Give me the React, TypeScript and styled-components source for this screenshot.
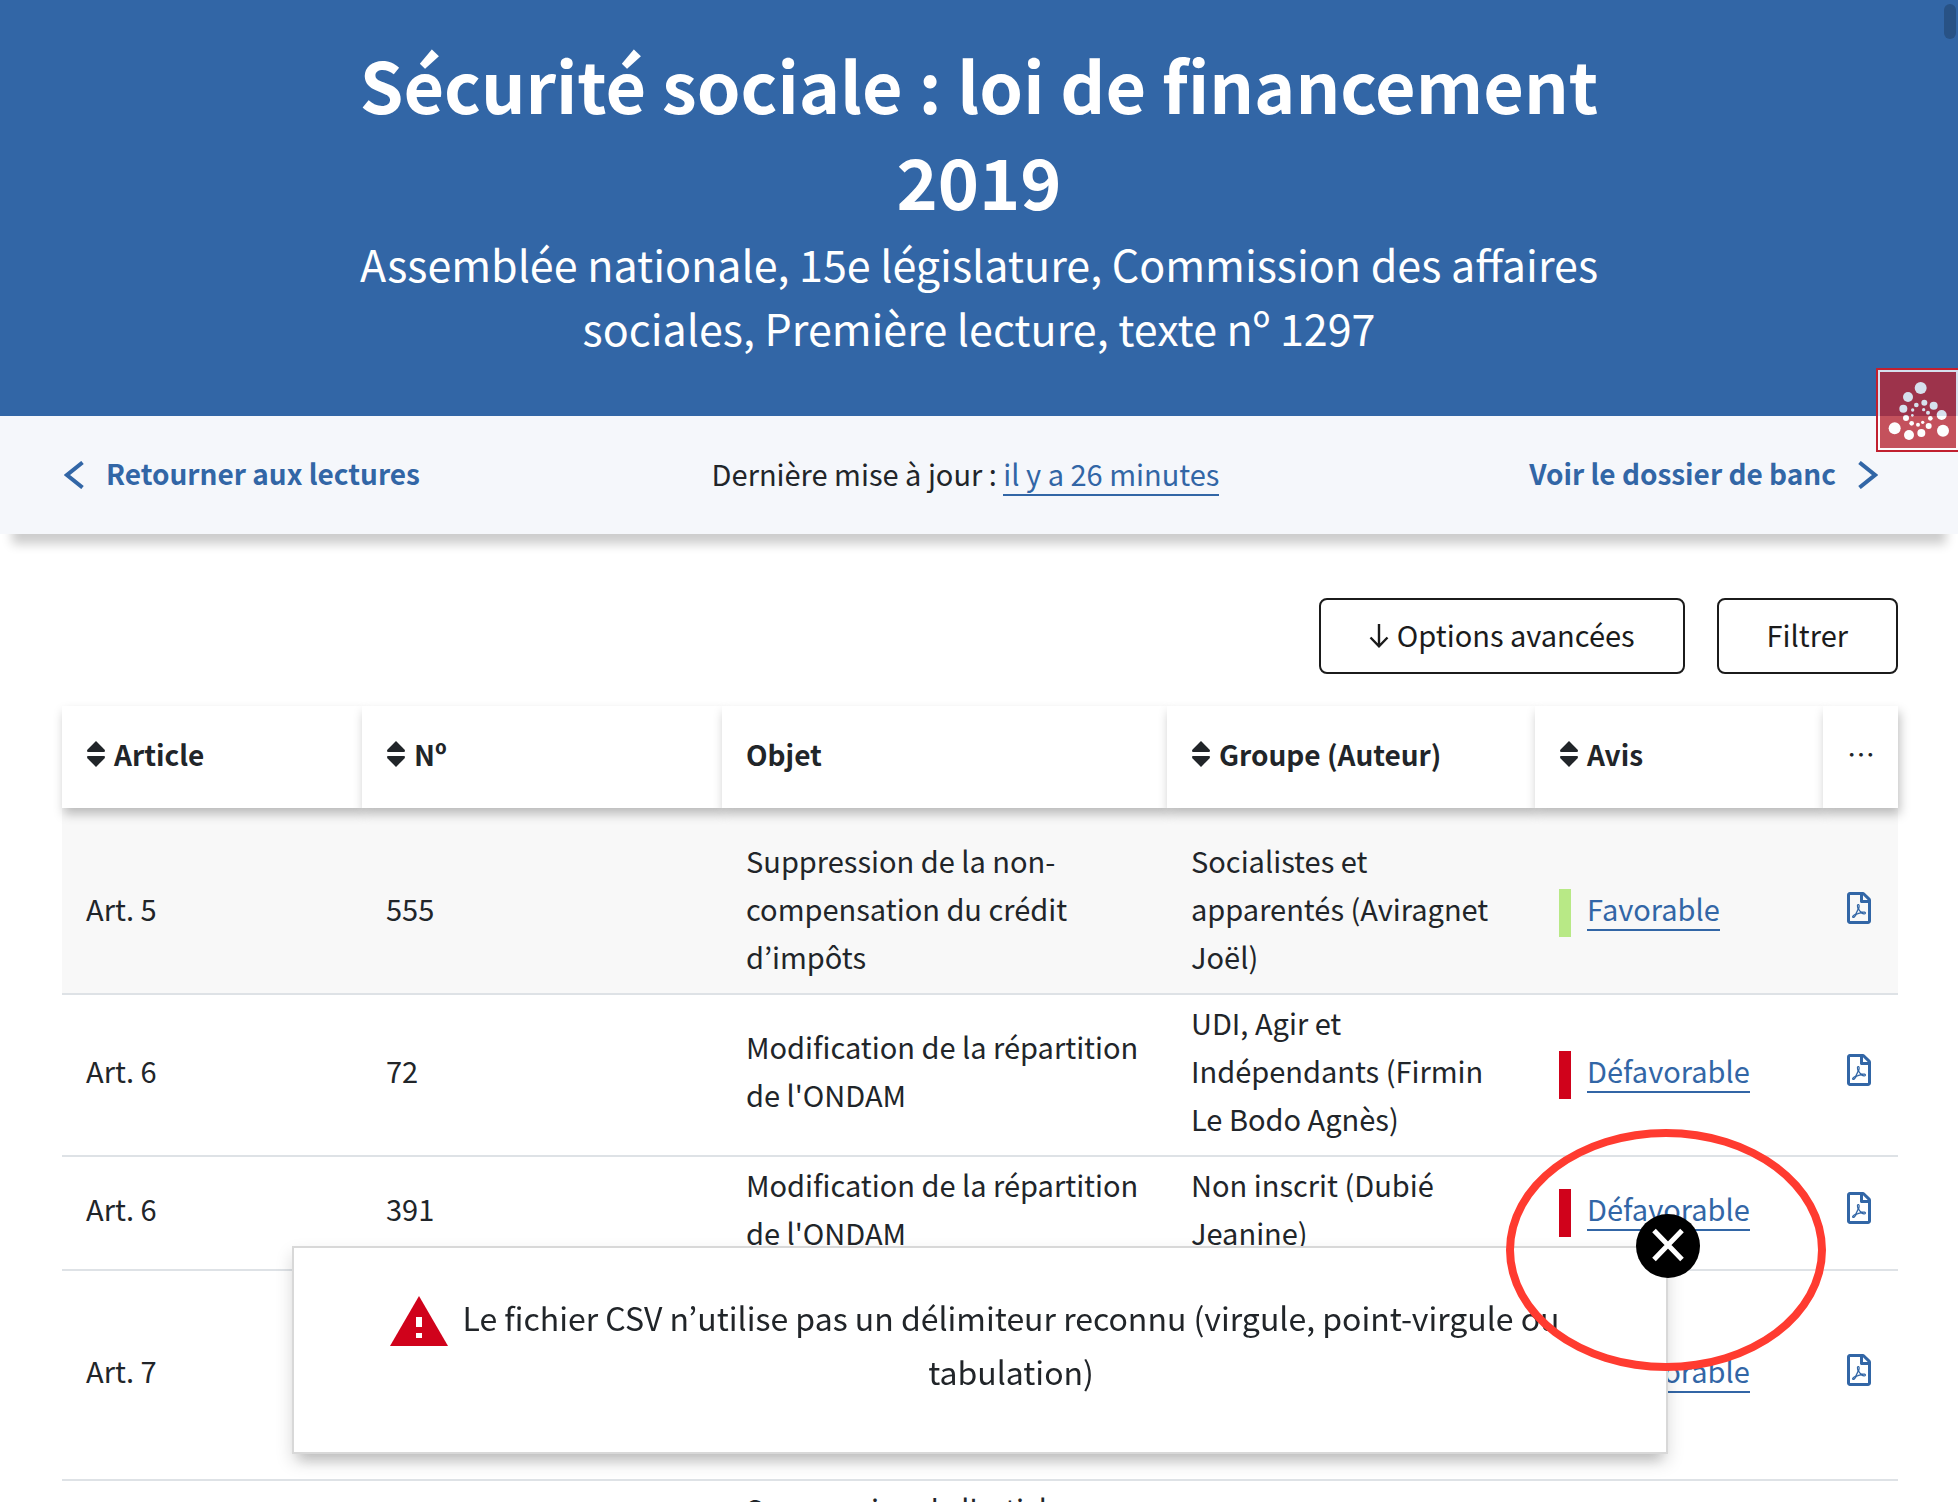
import React from "react";
import styled, { createGlobalStyle } from "styled-components";
import { FaRegFilePdf } from "react-icons/fa";

const color = {
  blue: "#3266a6",
  ink: "#212529",
  line: "#dee2e6",
  red: "#d0021b",
  green: "#b8e986",
};

const GlobalStyle = createGlobalStyle`
  *, *::before, *::after { box-sizing: border-box; }
  html, body { margin: 0; height: 100vh; overflow: hidden; background: #fff; }
  body {
    color: ${color.ink};
    font-family: "Noto Sans CJK JP", "Noto Sans CJK SC", "Open Sans", sans-serif;
    font-size: 29px;
    line-height: 48px;
  }
`;

const Hero = styled.header`
  padding: 36px 32px 57px;
  background: ${color.blue};
  color: #fff;
  text-align: center;
`;

const Title = styled.h1`
  max-width: 1300px;
  margin: 0 auto 3px;
  font-size: 70px;
  font-weight: 600;
  line-height: 96px;
`;

const Subtitle = styled.p`
  max-width: 1300px;
  margin: 0 auto;
  font-size: 43px;
  line-height: 64px;
`;

const NavBar = styled.nav`
  display: flex;
  justify-content: space-between;
  padding: 33px 80px 37px 64px;
  background: #f5f7fb;
  box-shadow: 0 22px 10px -12px rgba(0, 0, 0, 0.2);
`;

const NavLink = styled.a<{ $forward?: boolean }>`
  display: flex;
  align-items: center;
  gap: 22px;
  padding-left: ${(p) => (p.$forward ? 18 : 0)}px;
  color: ${color.blue};
  font-size: 28px;
  font-weight: 600;
  text-decoration: none;
`;

const Chevron = styled.svg`
  width: 20px;
  height: 28px;
  margin-top: 4px;
  fill: none;
  stroke: ${color.blue};
  stroke-width: 4;
`;

const TextLink = styled.a`
  color: ${color.blue};
  border-bottom: 2px solid ${color.blue};
  text-decoration: none;
`;

const Main = styled.main`
  padding: 64px 60px 0 62px;
`;

const Toolbar = styled.div`
  display: flex;
  justify-content: flex-end;
  gap: 32px;
  margin-bottom: 32px;
`;

const OutlineButton = styled.button`
  display: flex;
  align-items: center;
  gap: 8px;
  padding: 10px 48px 14px;
  border: 2px solid #1b1b1b;
  border-radius: 8px;
  background: #fff;
  color: #1b1b1b;
  font: inherit;
`;

const DownArrow = styled.svg`
  width: 20px;
  height: 24px;
  margin-top: 4px;
  fill: none;
  stroke: currentColor;
  stroke-width: 2.4;
`;

const Table = styled.table`
  width: 100%;
  table-layout: fixed;
  border-collapse: separate;
  border-spacing: 0;
`;

const Col = styled.col<{ $width: number }>`
  width: ${(p) => p.$width}px;
`;

const HeadCell = styled.th`
  position: relative;
  z-index: 1;
  padding: 24px 0 30px 24px;
  background: #fff;
  box-shadow: 2px 6px 10px rgba(0, 0, 0, 0.25);
  font-size: 28px;
  font-weight: 600;
  text-align: left;
`;

const SortButton = styled.button`
  display: flex;
  align-items: center;
  gap: 8px;
  padding: 0;
  border: 0;
  background: none;
  color: inherit;
  font: inherit;
`;

const SortIcon = styled.svg`
  width: 20px;
  height: 26px;
  fill: currentColor;
`;

const MoreLabel = styled.span`
  font-weight: 400;
`;

const Row = styled.tr<{ $lines: number; $first?: boolean }>`
  height: ${(p) => p.$lines * 48 + (p.$first ? 43 : 18)}px;
  background: ${(p) => (p.$first ? "#f8f8f8" : "#fff")};

  > td {
    padding-top: ${(p) => (p.$first ? 28 : 3)}px;
  }
  > td:nth-child(5) {
    padding-top: ${(p) => (p.$first ? 33 : 8)}px;
    padding-bottom: 8px;
  }
`;

const Cell = styled.td`
  padding: 3px 24px 13px;
  border-bottom: 2px solid ${color.line};
  vertical-align: middle;
`;

const Opinion = styled.div`
  display: flex;
  align-items: center;
  gap: 16px;
`;

const OpinionMark = styled.span<{ $favorable?: boolean }>`
  width: 12px;
  height: 48px;
  background: ${(p) => (p.$favorable ? color.green : color.red)};
`;

const OpinionText = styled.span`
  padding-bottom: 10px;
`;

const PdfLink = styled.a`
  display: flex;
  color: ${color.blue};

  svg {
    width: 24px;
    height: 32px;
  }
`;

const Alert = styled.div`
  position: fixed;
  z-index: 5;
  left: 292px;
  right: 290px;
  bottom: 48px;
  display: flex;
  gap: 4px;
  padding: 42px 96px 54px;
  border: 2px solid #d8d8d8;
  background: #fff;
  box-shadow: 0 8px 16px rgba(0, 0, 0, 0.15), 0 14px 12px -8px rgba(0, 0, 0, 0.15);
`;

const AlertText = styled.p`
  flex: 1;
  margin: 0;
  font-size: 32px;
  line-height: 54px;
  text-align: center;
`;

const WarningIcon = styled.svg`
  flex: none;
  width: 58px;
  height: 50px;
  margin-top: 6px;
`;

const CloseButton = styled.button`
  position: absolute;
  top: -34px;
  right: -34px;
  width: 64px;
  height: 64px;
  padding: 0;
  border: 0;
  border-radius: 50%;
  background: #000;

  svg {
    display: block;
    width: 64px;
    height: 64px;
    stroke: #fff;
    stroke-width: 5;
  }
`;

const Highlight = styled.div`
  position: absolute;
  top: -119px;
  right: -160px;
  width: 320px;
  height: 242px;
  border: 8px solid #ff3b30;
  border-radius: 50%;
  pointer-events: none;
`;

const Badge = styled.button`
  position: fixed;
  z-index: 6;
  top: 368px;
  right: -2px;
  width: 84px;
  height: 84px;
  padding: 0;
  border: 2px solid #c1202f;
  background: none;
`;

const BadgeFace = styled.span`
  display: block;
  height: 80px;
  border: 2px solid #fff;
  background: #b82735;
  opacity: 0.8;

  svg {
    display: block;
    width: 76px;
    height: 76px;
    fill: #fff;
  }
`;

const ScrollThumb = styled.div`
  position: fixed;
  z-index: 7;
  top: 4px;
  right: 2px;
  width: 12px;
  height: 35px;
  border-radius: 6px;
  background: #285285;
`;

const dots = [
  [182, 84, 18], [144, 111, 15], [130, 146, 12], [104, 205, 18], [147, 225, 15],
  [184, 219, 12], [249, 212, 18], [245, 165, 15], [221, 137, 12], [193, 128, 9],
  [169, 135, 7], [158, 150, 5], [157, 166, 4], [138, 174, 9], [155, 190, 7],
  [174, 194, 6], [188, 187, 5], [211, 175, 7], [206, 198, 9], [204, 158, 6],
  [191, 149, 5],
];

const columns = [
  { label: "Article", width: 300, sortable: true },
  { label: "Nº", width: 360, sortable: true },
  { label: "Objet", width: 445, sortable: false },
  { label: "Groupe (Auteur)", width: 368, sortable: true },
  { label: "Avis", width: 288, sortable: true },
];

interface Amendment {
  article: string;
  number: string;
  subject: string;
  group: string;
  opinion: string;
  lines: number;
}

const amendments: Amendment[] = [
  {
    article: "Art. 5",
    number: "555",
    subject: "Suppression de la non-compensation du crédit d’impôts",
    group: "Socialistes et apparentés (Aviragnet Joël)",
    opinion: "Favorable",
    lines: 3,
  },
  {
    article: "Art. 6",
    number: "72",
    subject: "Modification de la répartition de l'ONDAM",
    group: "UDI, Agir et Indépendants (Firmin Le Bodo Agnès)",
    opinion: "Défavorable",
    lines: 3,
  },
  {
    article: "Art. 6",
    number: "391",
    subject: "Modification de la répartition de l'ONDAM",
    group: "Non inscrit (Dubié Jeanine)",
    opinion: "Défavorable",
    lines: 2,
  },
  { article: "Art. 7", number: "", subject: "", group: "", opinion: "Défavorable", lines: 4 },
];

function Sorter() {
  return (
    <SortIcon viewBox="0 0 20 26" aria-hidden="true">
      <path d="M10 0 L18.4 8.6 Q20 11 17.6 11 H2.4 Q0 11 1.6 8.6Z" />
      <path d="M10 26 L18.4 17.4 Q20 15 17.6 15 H2.4 Q0 15 1.6 17.4Z" />
    </SortIcon>
  );
}

export default function App() {
  return (
    <>
      <GlobalStyle />
      <Hero>
        <Title>Sécurité sociale : loi de financement 2019</Title>
        <Subtitle>
          Assemblée nationale, 15e législature, Commission des affaires sociales, Première lecture,
          texte nº 1297
        </Subtitle>
      </Hero>
      <NavBar>
        <NavLink href="#lectures">
          <Chevron viewBox="0 0 20 28" aria-hidden="true">
            <path d="M18.5 1.5 L3 14 L18.5 26.5" />
          </Chevron>
          Retourner aux lectures
        </NavLink>
        <span>
          Dernière mise à jour : <TextLink href="#journal">il y a 26 minutes</TextLink>
        </span>
        <NavLink href="#dossier" $forward>
          Voir le dossier de banc
          <Chevron viewBox="0 0 20 28" aria-hidden="true">
            <path d="M1.5 1.5 L17 14 L1.5 26.5" />
          </Chevron>
        </NavLink>
      </NavBar>
      <Main>
        <Toolbar>
          <OutlineButton type="button">
            <DownArrow viewBox="0 0 20 24" aria-hidden="true">
              <path d="M10 0 V22 M1.5 13.5 L10 22.3 L18.5 13.5" />
            </DownArrow>
            Options avancées
          </OutlineButton>
          <OutlineButton type="button">Filtrer</OutlineButton>
        </Toolbar>
        <Table>
          <colgroup>
            {columns.map((c) => (
              <Col key={c.label} $width={c.width} />
            ))}
            <Col $width={75} />
          </colgroup>
          <thead>
            <tr>
              {columns.map((c) => (
                <HeadCell key={c.label} scope="col">
                  {c.sortable ? (
                    <SortButton type="button">
                      <Sorter />
                      {c.label}
                    </SortButton>
                  ) : (
                    c.label
                  )}
                </HeadCell>
              ))}
              <HeadCell scope="col">
                <MoreLabel>⋯</MoreLabel>
              </HeadCell>
            </tr>
          </thead>
          <tbody>
            {amendments.map((a, i) => (
              <Row key={i} $lines={a.lines} $first={i === 0}>
                <Cell>{a.article}</Cell>
                <Cell>{a.number}</Cell>
                <Cell>{a.subject}</Cell>
                <Cell>{a.group}</Cell>
                <Cell>
                  <Opinion>
                    <OpinionMark $favorable={a.opinion === "Favorable"} />
                    <OpinionText>
                      <TextLink href="#reponse">{a.opinion}</TextLink>
                    </OpinionText>
                  </Opinion>
                </Cell>
                <Cell>
                  <PdfLink href="#pdf" aria-label="PDF">
                    <FaRegFilePdf />
                  </PdfLink>
                </Cell>
              </Row>
            ))}
            <Row $lines={1}>
              <Cell />
              <Cell />
              <Cell>Suppression de l'article</Cell>
              <Cell />
              <Cell />
              <Cell />
            </Row>
          </tbody>
        </Table>
      </Main>
      <Alert role="alert">
        <WarningIcon viewBox="0 0 58 50" aria-hidden="true">
          <path d="M29 0 L58 50 H0Z" fill={color.red} />
          <path d="M26 21 h6 v10 h-6Z M26 37 h6 v5 h-6Z" fill="#fff" />
        </WarningIcon>
        <AlertText>
          Le fichier CSV n’utilise pas un délimiteur reconnu (virgule, point-virgule ou tabulation)
        </AlertText>
        <CloseButton type="button" aria-label="Fermer">
          <svg viewBox="0 0 64 64">
            <path d="M18 16.5 L46 45.5 M46 16.5 L18 45.5" />
          </svg>
        </CloseButton>
        <Highlight />
      </Alert>
      <Badge type="button" aria-label="Assemblée">
        <BadgeFace>
          <svg viewBox="60 36 228 228">
            {dots.map(([x, y, r], i) => (
              <circle key={i} cx={x} cy={y} r={r} />
            ))}
          </svg>
        </BadgeFace>
      </Badge>
      <ScrollThumb />
    </>
  );
}
